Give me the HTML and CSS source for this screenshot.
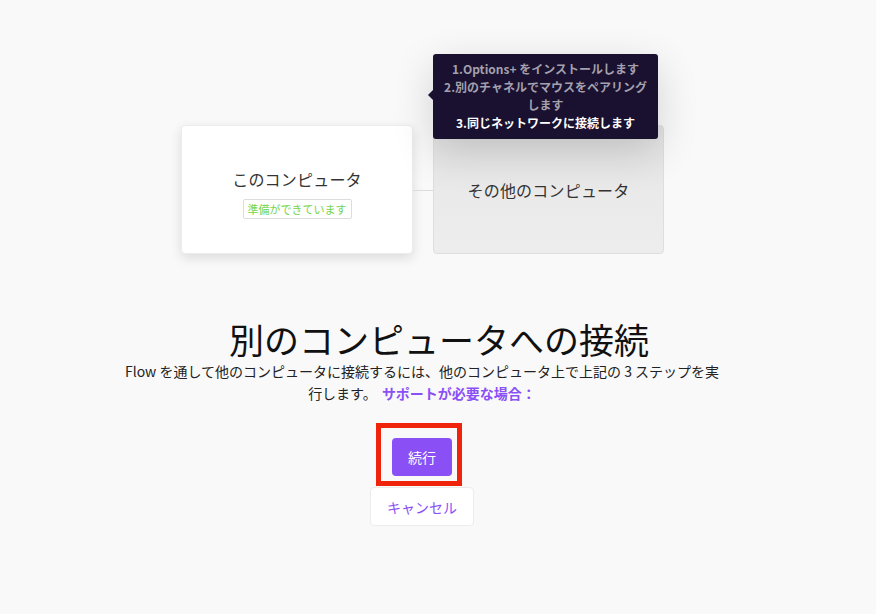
FILE: index.html
```html
<!DOCTYPE html>
<html lang="ja">
<head>
    <meta charset="UTF-8">
    <meta name="viewport" content="width=device-width, initial-scale=1.0">
    <title>別のコンピュータへの接続</title>
    <link rel="stylesheet" href="styles.css">
</head>
<body>
    <div class="page">
        <div class="devices">
            <div class="card this-pc">
                <h2>このコンピュータ</h2>
                <span class="badge">準備ができています</span>
            </div>
            <div class="connector"></div>
            <div class="card other-pc">
                <div class="tooltip">
                    <p>1.Options+ をインストールします</p>
                    <p>2.別のチャネルでマウスをペアリングします</p>
                    <p class="current">3.同じネットワークに接続します</p>
                </div>
                <h2>その他のコンピュータ</h2>
            </div>
        </div>

        <h1>別のコンピュータへの接続</h1>
        <p class="desc">Flow を通して他のコンピュータに接続するには、他のコンピュータ上で上記の 3 ステップを実行します。 <a href="#">サポートが必要な場合：</a></p>

        <div class="actions">
            <div class="highlight">
                <button class="btn primary">続行</button>
            </div>
            <button class="btn secondary">キャンセル</button>
        </div>
    </div>
</body>
</html>
```

FILE: styles.css
```css
body {
    font-family: "Noto Sans CJK JP", "Noto Sans", sans-serif;
    margin: 0;
    background-color: #f9f9f9;
    color: #222;
}
.page {
    width: 844px;
    display: flex;
    flex-direction: column;
    align-items: center;
    padding-top: 125px;
}
.devices {
    display: flex;
    align-items: stretch;
    margin-left: 1px;
}
.card {
    width: 232px;
    height: 129px;
    box-sizing: border-box;
    border-radius: 4px;
    display: flex;
    flex-direction: column;
    align-items: center;
    justify-content: center;
}
.card h2 {
    font-size: 16px;
    font-weight: 400;
    color: #333;
    margin: 0;
    letter-spacing: 0.2px;
}
.this-pc {
    background: #fff;
    border: 1px solid #ececec;
    box-shadow: 0 4px 12px rgba(0, 0, 0, 0.12);
    padding-top: 6px;
}
.this-pc h2 {
    margin-bottom: 8px;
}
.badge {
    font-size: 11px;
    color: #74d54a;
    border: 1px solid #dcdcdc;
    border-radius: 2px;
    padding: 0 4px;
    line-height: 18px;
}
.connector {
    width: 20px;
    height: 1px;
    background: #dcdcdc;
    align-self: center;
    margin-top: 1px;
}
.other-pc {
    position: relative;
    width: 231px;
    background: linear-gradient(180deg, #e3e3e3 0%, #eaeaea 55%, #ededed 100%);
    border: 1px solid #dedede;
}
.tooltip {
    position: absolute;
    left: -1px;
    top: -72px;
    width: 225px;
    box-sizing: border-box;
    background: #19112f;
    border-radius: 3px;
    padding: 6px 8px 7px;
    text-align: center;
    box-shadow: 0 12px 40px rgba(0, 0, 0, 0.16);
    z-index: 2;
}
.tooltip::before {
    content: "";
    position: absolute;
    left: -5px;
    top: 36px;
    border-top: 5px solid transparent;
    border-bottom: 5px solid transparent;
    border-right: 5px solid #19112f;
}
.tooltip p {
    margin: 0;
    font-size: 12px;
    line-height: 18px;
    color: #a4a0ae;
    font-weight: 700;
}
.tooltip .current {
    color: #fff;
}
h1 {
    font-size: 35px;
    font-weight: 400;
    color: #111;
    margin: 66px 0 2px 34px;
    line-height: 38px;
}
.desc {
    width: 600px;
    margin: 0;
    font-size: 14px;
    line-height: 22px;
    text-align: center;
    color: #222;
}
.desc a {
    color: #8a50f6;
    font-weight: 700;
    text-decoration: none;
    margin-left: 2px;
}
.actions {
    display: flex;
    flex-direction: column;
    align-items: center;
    margin-top: 19px;
}
.highlight {
    border: 5px solid #f0230b;
    padding: 10px 5px 5px 11px;
    margin-right: 6px;
}
.btn {
    font-family: inherit;
    font-size: 14px;
    border-radius: 4px;
    cursor: pointer;
}
.primary {
    width: 60px;
    height: 38px;
    background: #8a50f6;
    color: #fff;
    border: none;
}
.secondary {
    width: 104px;
    height: 39px;
    margin-top: 1px;
    background: #fff;
    color: #8a50f6;
    border: 1px solid #ececec;
}
```
